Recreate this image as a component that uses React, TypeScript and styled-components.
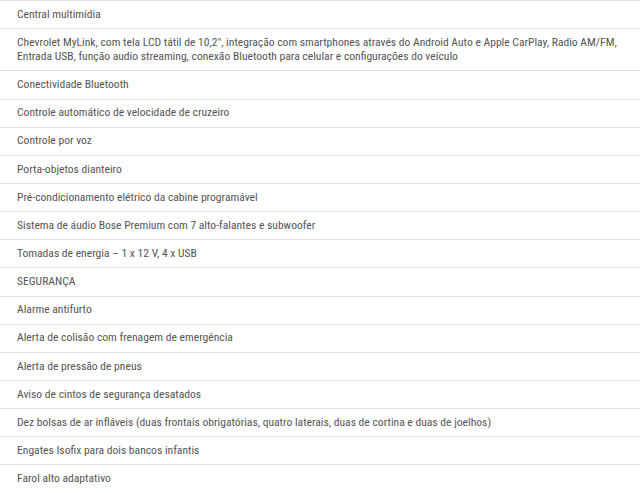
import React from "react";
import styled, { createGlobalStyle } from "styled-components";

const Global = createGlobalStyle`
  html, body { margin: 0; padding: 0; background: #ffffff; }
  body { font-family: Roboto, "Liberation Sans", sans-serif; }
`;

const List = styled.ul`
  list-style: none;
  margin: 0;
  padding: 0;
  width: 640px;
  border-top: 1px solid #e3e3e3;
`;

const Row = styled.li`
  display: block;
  padding: 5.7px 17px 7.3px 17px;
  box-sizing: border-box;
  border-bottom: 1px solid #e3e3e3;
  font-family: Roboto, "Liberation Sans", sans-serif;
  font-stretch: condensed;
  font-size: 11.6px;
  line-height: 14.15px;
  color: #555555;
`;

const items = [
  "Central multimídia",
  "Chevrolet MyLink, com tela LCD tátil de 10,2\", integração com smartphones através do Android Auto e Apple CarPlay, Radio AM/FM, Entrada USB, função audio streaming, conexão Bluetooth para celular e configurações do veículo",
  "Conectividade Bluetooth",
  "Controle automático de velocidade de cruzeiro",
  "Controle por voz",
  "Porta-objetos dianteiro",
  "Pré-condicionamento elétrico da cabine programável",
  "Sistema de áudio Bose Premium com 7 alto-falantes e subwoofer",
  "Tomadas de energia – 1 x 12 V, 4 x USB",
  "SEGURANÇA",
  "Alarme antifurto",
  "Alerta de colisão com frenagem de emergência",
  "Alerta de pressão de pneus",
  "Aviso de cintos de segurança desatados",
  "Dez bolsas de ar infláveis (duas frontais obrigatórias, quatro laterais, duas de cortina e duas de joelhos)",
  "Engates Isofix para dois bancos infantis",
  "Farol alto adaptativo",
];

export default function App() {
  return (
    <>
      <Global />
      <List>
        {items.map((t, i) => (
          <Row key={i}>{t}</Row>
        ))}
      </List>
    </>
  );
}
